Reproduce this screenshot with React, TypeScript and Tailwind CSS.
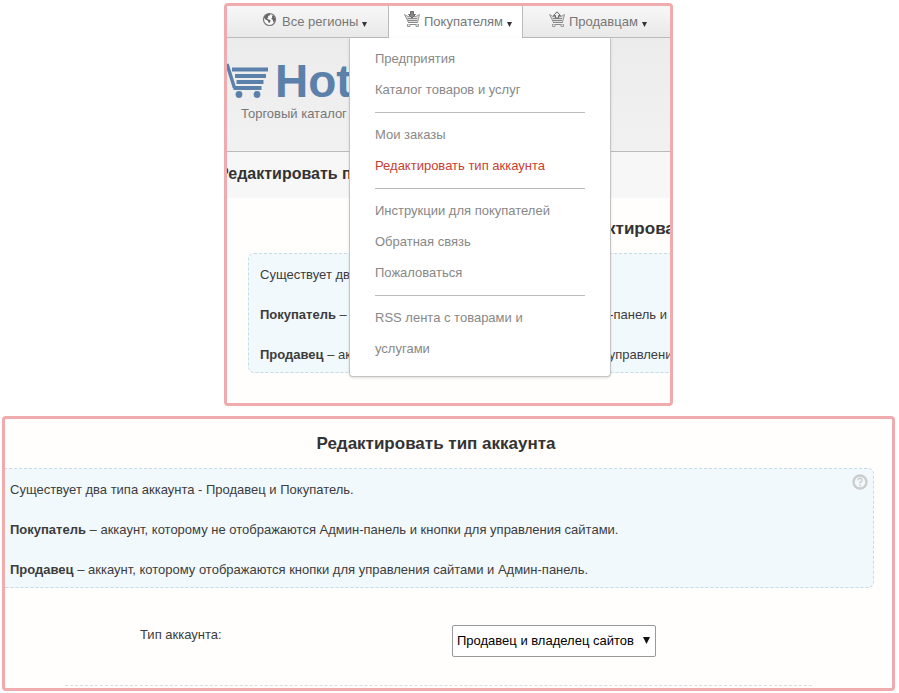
import type { ReactNode } from 'react'

const menuGroups = [
  ['Предприятия', 'Каталог товаров и услуг'],
  ['Мои заказы', 'Редактировать тип аккаунта'],
  ['Инструкции для покупателей', 'Обратная связь', 'Пожаловаться'],
  ['RSS лента с товарами и услугами'],
]

const ACTIVE_ITEM = 'Редактировать тип аккаунта'

function GlobeIcon() {
  return (
    <svg width="16" height="15" viewBox="0 0 16 15" aria-hidden="true">
      <circle cx="7.5" cy="7.5" r="6" fill="#fafafa" stroke="#777" strokeWidth="1.2" />
      <path d="M2 5.5 3.6 3 6 1.8 8.6 2 7.6 3.6 6 4 6.4 5.6 4.8 6 6.6 7.4 8.6 8.2 8 10.4 6.8 11 5.6 8.6 3.4 7.4z" fill="#666" />
      <path d="M9.6 3.4 11.8 4 13.2 6.6 12.8 9.4 11.4 10.4 10.8 8 9.2 6.8 10.4 5.2z" fill="#666" />
    </svg>
  )
}

function BasketIcon({ up = false }: { up?: boolean }) {
  return (
    <svg width="16" height="17" viewBox="0 0 16 17" fill="none" stroke="#999" aria-hidden="true">
      <path d="M.5 3.5 4 5.500h8l3.500-2-2 8h-9z" fill="#ddd" />
      <path d="M3.500 7.500h9.500M3.500 9.500h9.500M4 11.500h9.500M3 13.500h12" stroke="#8a8a8a" />
      <path d="M3.500 13.500v2H6v-2M12 13.500v2h2.500v-2" fill="#eee" />
      <path
        d={up ? 'M8 .8 11.500 4.500h-2v2.500h-3V4.500h-2z' : 'M6.500.5h3v3h2L8 7 4.500 3.500h2z'}
        fill={up ? '#eee' : '#888'}
        stroke="#6a6a6a"
      />
    </svg>
  )
}

function CartLogo() {
  return (
    <svg width="42" height="36" viewBox="0 0 42 36" fill="none" stroke="#5b80aa" aria-hidden="true">
      <path d="M0 1l7.5 24" strokeWidth="3.5" />
      <path d="M5 6.5h36M8 13h31M9.5 19h27M6.5 25h28" strokeWidth="3.8" />
      <circle cx="12" cy="31.5" r="3.4" fill="#5b80aa" stroke="none" />
      <circle cx="30" cy="31.5" r="3.4" fill="#5b80aa" stroke="none" />
    </svg>
  )
}

function Caret() {
  return (
    <svg width="5" height="5" viewBox="0 0 5 5" className="mt-[6px]" aria-hidden="true">
      <path d="M0 0h5L2.5 5z" fill="#333" />
    </svg>
  )
}

function HelpIcon() {
  return (
    <svg width="16" height="16" viewBox="0 0 16 16" fill="none" stroke="#ccc" aria-hidden="true">
      <circle cx="8" cy="8" r="6.5" strokeWidth="2.4" />
      <path d="M5.9 6.4c0-2.8 4.3-2.6 4.2-.2C10 7.7 8 7.6 8 9.4M8 10.6v1.6" strokeWidth="1.5" />
    </svg>
  )
}

function DropdownMenu() {
  return (
    <div className="absolute top-full -left-10 z-10 w-[262px] rounded-b border border-t-0 border-[#c4c4c4] bg-white px-[25px] pt-[5px] pb-3 shadow-sm">
      {menuGroups.map((group, i) => (
        <ul key={group[0]} className={i > 0 ? 'mt-[7px] border-t border-[#bbb] pt-[6px]' : ''}>
          {group.map((item) => (
            <li key={item}>
              <a
                href="#"
                className={`block pr-2 leading-[31px] ${item === ACTIVE_ITEM ? 'text-[#c8402f]' : 'text-[#888]'}`}
              >
                {item}
              </a>
            </li>
          ))}
        </ul>
      ))}
    </div>
  )
}

function NavButton({ icon, label }: { icon: ReactNode; label: string }) {
  return (
    <button type="button" className="flex items-center gap-1 text-[#777]">
      <span className="pb-1">{icon}</span>
      <span>{label}</span>
      <Caret />
    </button>
  )
}

function AccountInfo({ help = false }: { help?: boolean }) {
  return (
    <>
      <h2 className="text-center text-[17px] leading-5 font-bold text-[#333]">Редактировать тип аккаунта</h2>
      <div className="relative mt-[14px] rounded-md border border-dashed border-[#c5dbe8] bg-[#f2f9fd] px-[11px] pt-[11px] pb-[7px] leading-5 whitespace-nowrap">
        <p>Существует два типа аккаунта - Продавец и Покупатель.</p>
        <p className="mt-5">
          <b>Покупатель</b> – аккаунт, которому не отображаются Админ-панель и кнопки для управления сайтами.
        </p>
        <p className="mt-5">
          <b>Продавец</b> – аккаунт, которому отображаются кнопки для управления сайтами и Админ-панель.
        </p>
        {help && (
          <button type="button" aria-label="Помощь" className="absolute top-[5px] right-[5px]">
            <HelpIcon />
          </button>
        )}
      </div>
    </>
  )
}

export default function App() {
  return (
    <main className="flex flex-col gap-[10px] bg-white pt-[3px] pr-1 pb-[2px] pl-[2px] font-['Liberation_Sans',Arial,sans-serif] text-[13px] text-[#3c3c3c]">
      {/* Site header with the opened buyers menu */}
      <section className="mx-auto w-full max-w-[449px] overflow-hidden rounded border-3 border-[#f0abae] bg-[#fffefc] pb-[30px]">
        <nav className="flex h-8 border-b border-[#bbb] bg-linear-to-b from-[#f7f7f7] to-[#e9e9e9]">
          <div className="flex w-[161px] shrink-0 pl-[35px]">
            <NavButton icon={<GlobeIcon />} label="Все регионы" />
          </div>
          <div className="relative -mb-px flex w-[135px] shrink-0 border-x border-[#bbb] bg-white pb-px pl-[15px]">
            <NavButton icon={<BasketIcon />} label="Покупателям" />
            <DropdownMenu />
          </div>
          <div className="flex pl-[26px]">
            <NavButton icon={<BasketIcon up />} label="Продавцам" />
          </div>
        </nav>
        <header className="h-[114px] border-b border-[#bbb] bg-linear-to-b from-[#ececec] to-[#f1f1f1] pt-5">
          <a href="#" className="flex items-center gap-[6px]">
            <CartLogo />
            <span className="text-[46px] leading-[46px] font-bold text-[#5b80aa]">Hot</span>
          </a>
          <p className="pl-[14px] leading-5 text-[#777]">Торговый каталог</p>
        </header>
        <div className="bg-[#f7f7f7] pb-[2px]">
          <h1 className="-ml-[9px] text-[16px] leading-11 font-bold whitespace-nowrap text-[#333]">
            Редактировать п
          </h1>
        </div>
        <div className="ml-[21px] w-[876px] pt-[21px]">
          <AccountInfo />
        </div>
      </section>

      {/* Account type form */}
      <section className="overflow-hidden rounded border-3 border-[#f0abae] bg-[#fffefd] pt-[15px] pb-[2px]">
        <div className="mr-[18px] -ml-[7px]">
          <AccountInfo help />
        </div>
        <form className="mr-20 ml-[60px] flex items-start border-b border-dashed border-[#d5dfe5] pt-[37px] pb-7 pl-[75px]">
          <label htmlFor="account-type" className="w-[312px] leading-5">
            Тип аккаунта:
          </label>
          <div className="relative">
            <select
              id="account-type"
              className="h-8 appearance-none rounded-xs border border-[#999] bg-white pr-[21px] pl-1 text-black"
            >
              <option>Продавец и владелец сайтов</option>
              <option>Покупатель</option>
            </select>
            <svg
              width="7"
              height="7"
              viewBox="0 0 7 7"
              className="pointer-events-none absolute top-3 right-[6px]"
              aria-hidden="true"
            >
              <path d="M0 0h7L3.5 7z" fill="#111" />
            </svg>
          </div>
        </form>
      </section>
    </main>
  )
}
